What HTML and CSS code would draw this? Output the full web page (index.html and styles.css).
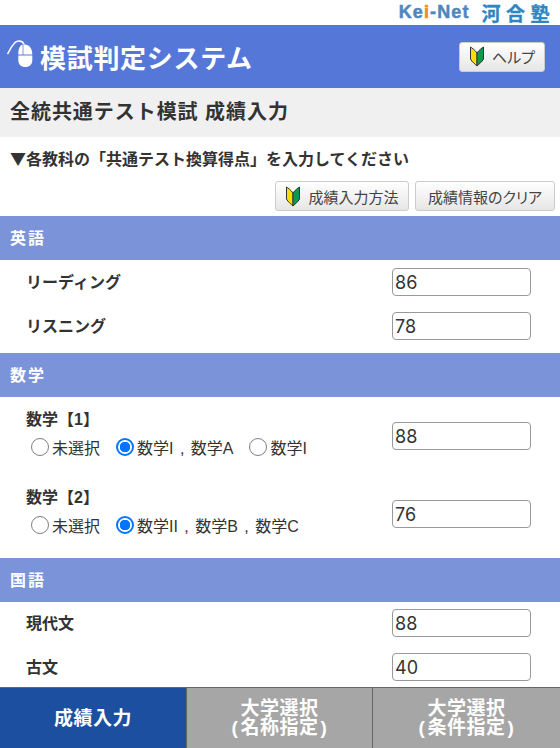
FILE: index.html
```html
<!DOCTYPE html>
<html lang="ja">
<head>
    <meta charset="UTF-8">
    <meta name="viewport" content="width=device-width, initial-scale=1.0">
    <title>模試判定システム</title>
    <link rel="stylesheet" href="styles.css">
</head>
<body>
    <div class="logos">
        <span class="kei">Ke<span class="kei-i">i</span>-Net</span>
        <span class="juku">河合塾</span>
    </div>
    <div class="header">
        <div class="brand">
            <svg class="mouse" width="28" height="30" viewBox="0 0 28 30">
                <path d="M0.500 14 C2.500 11 4 7 6 5 C8 2 10 1 12 1 C14.500 1 16 2 17 4" fill="none" stroke="#fff" stroke-width="1.500"/>
                <path d="M11.300 14.600 C11.300 9 12.500 5.500 15.600 4.500 L15.600 14.600 Z" fill="#fff"/>
                <path d="M16.400 4.200 C22 4.200 25.300 8 25.300 14.600 L16.400 14.600 Z" fill="#fff"/>
                <path d="M11.300 15.400 L25.300 15.400 L25.300 20 C25.300 24.500 22.500 27 18.300 27 C14 27 11.300 24.500 11.300 20 Z" fill="#fff"/>
            </svg>
            <h1>模試判定システム</h1>
        </div>
        <a class="button help">
            <svg class="leaf" width="16" height="21" viewBox="0 0 16 21"><use href="#leaf"/></svg>
            ヘルプ
        </a>
    </div>
    <h2 class="page-title">全統共通テスト模試 成績入力</h2>
    <p class="lead">▼各教科の「共通テスト換算得点」を入力してください</p>
    <div class="actions">
        <a class="button how">
            <svg class="leaf" width="16" height="21" viewBox="0 0 16 21"><use href="#leaf"/></svg>
            成績入力方法
        </a>
        <a class="button clear">成績情報のクリア</a>
    </div>

    <h3 class="section">英語</h3>
    <div class="group">
        <div class="row">
            <span class="label">リーディング</span>
            <input class="score" type="text" value="86">
        </div>
        <div class="row">
            <span class="label">リスニング</span>
            <input class="score" type="text" value="78">
        </div>
    </div>

    <h3 class="section">数学</h3>
    <div class="group">
        <div class="row tall">
            <div class="choice">
                <span class="label">数学【1】</span>
                <div class="radios">
                    <label><input type="radio" name="math1">未選択</label>
                    <label><input type="radio" name="math1" checked>数学I , 数学A</label>
                    <label><input type="radio" name="math1">数学I</label>
                </div>
            </div>
            <input class="score" type="text" value="88">
        </div>
        <div class="row tall">
            <div class="choice">
                <span class="label">数学【2】</span>
                <div class="radios">
                    <label><input type="radio" name="math2">未選択</label>
                    <label><input type="radio" name="math2" checked>数学II , 数学B , 数学C</label>
                </div>
            </div>
            <input class="score" type="text" value="76">
        </div>
    </div>

    <h3 class="section">国語</h3>
    <div class="group japanese">
        <div class="row">
            <span class="label">現代文</span>
            <input class="score" type="text" value="88">
        </div>
        <div class="row">
            <span class="label">古文</span>
            <input class="score" type="text" value="40">
        </div>
    </div>

    <div class="tabs">
        <a class="tab active">成績入力</a>
        <a class="tab">大学選択<br>(&#8202;名称指定&#8202;)</a>
        <a class="tab">大学選択<br>(&#8202;条件指定&#8202;)</a>
    </div>

    <svg width="0" height="0" class="defs">
        <symbol id="leaf" viewBox="0 0 16 21">
            <path d="M8 7 C6 4 3 2 1.500 1 L1.500 13 C3 16 6 18 8 20 Z" fill="#f5e000" stroke="#333" stroke-width="1"/>
            <path d="M8 7 C10 4 13 2 14.500 1 L14.500 13 C13 16 10 18 8 20 Z" fill="#0a9a50" stroke="#333" stroke-width="1"/>
        </symbol>
    </svg>
</body>
</html>
```

FILE: styles.css
```css
:root {
    --blue: #5577d8;
    --section: #7b93d9;
    --text: #333;
    --radio: #0075ff;
}

html, body {
    margin: 0;
    padding: 0;
}

body {
    height: 748px;
    overflow: hidden;
    background-color: #fff;
    color: var(--text);
    font-family: "Liberation Sans", "Noto Sans CJK JP", sans-serif;
    font-size: 16px;
}

.defs {
    display: block;
}

.logos {
    height: 25px;
    display: flex;
    justify-content: flex-end;
    align-items: center;
    gap: 12px;
    padding-right: 5px;
    font-weight: bold;
}

.kei {
    color: #4f86c0;
    font-size: 18px;
    letter-spacing: 1.100px;
    -webkit-text-stroke: 0.500px #4f86c0;
}

.kei-i {
    color: #f08a24;
    -webkit-text-stroke: 0.500px #f08a24;
}

.juku {
    color: #2d86c2;
    font-size: 19px;
    letter-spacing: 5.500px;
    -webkit-text-stroke: 0.300px #2d86c2;
}

.header {
    height: 63px;
    background-color: var(--blue);
    display: flex;
    justify-content: space-between;
    align-items: center;
    padding: 0 15px 0 7px;
}

.brand {
    display: flex;
    align-items: center;
    gap: 5px;
}

.mouse {
    margin-bottom: 3px;
}

h1 {
    margin: 0;
    color: #fff;
    font-size: 26px;
    font-weight: bold;
    letter-spacing: 0.700px;
}

.button {
    box-sizing: border-box;
    display: flex;
    align-items: center;
    justify-content: center;
    gap: 7px;
    height: 30px;
    border: 1px solid #ccc;
    border-radius: 3px;
    background: linear-gradient(#fff, #e6e6e6);
    color: #444;
    font-size: 15px;
}

.help {
    width: 86px;
    font-feature-settings: "palt";
}

.how {
    width: 134px;
}

.clear {
    width: 140px;
    font-feature-settings: "palt";
}

.page-title {
    margin: 0;
    height: 49px;
    line-height: 49px;
    padding-left: 10px;
    background-color: #f0f0f0;
    font-size: 20px;
    font-weight: bold;
    letter-spacing: 0.950px;
}

.lead {
    margin: 0;
    height: 44px;
    line-height: 43px;
    padding-left: 10px;
    font-family: "Noto Sans CJK JP", sans-serif;
    font-size: 16px;
    font-weight: bold;
}

.actions {
    display: flex;
    justify-content: flex-end;
    gap: 6px;
    height: 35px;
    padding-right: 5px;
}

.section {
    margin: 0;
    height: 44px;
    line-height: 45px;
    padding-left: 10px;
    background-color: var(--section);
    color: #fff;
    font-size: 16px;
    font-weight: bold;
    letter-spacing: 2px;
}

.group {
    padding-bottom: 5px;
}

.japanese {
    margin-top: -1px;
}

.row {
    display: flex;
    justify-content: space-between;
    align-items: center;
    height: 44px;
    padding: 0 29px 0 26px;
}

.tall {
    height: 78px;
}

.choice {
    margin-bottom: 7px;
}

.label {
    display: block;
    padding-top: 1px;
    line-height: 20px;
    font-size: 16px;
    font-weight: bold;
}

.score {
    box-sizing: border-box;
    width: 139px;
    height: 28px;
    margin: 0;
    padding: 0 2px;
    border: 1px solid #999;
    border-radius: 4px;
    color: var(--text);
    font-family: "Inter", sans-serif;
    font-size: 18px;
}

.radios {
    display: flex;
    gap: 16px;
    margin-top: 7px;
    padding-left: 5px;
}

.radios label {
    display: flex;
    align-items: center;
    height: 20px;
    font-size: 16px;
    word-spacing: 2px;
}

.radios input {
    appearance: none;
    box-sizing: border-box;
    width: 18px;
    height: 18px;
    margin: 0 3px 0 0;
    border: 1.500px solid #808080;
    border-radius: 50%;
    background-color: #fff;
}

.radios input:checked {
    border: 2px solid var(--radio);
    background: radial-gradient(circle, var(--radio) 0 5px, #fff 5.500px);
}

.tabs {
    position: fixed;
    left: 0;
    right: 0;
    bottom: 0;
    height: 60px;
    display: grid;
    grid-template-columns: 186px 186px 188px;
    border-top: 1px solid #666;
}

.tab {
    display: flex;
    align-items: center;
    justify-content: center;
    background-color: #a6a6a6;
    border-left: 1px solid #666;
    color: #fff;
    font-size: 19px;
    font-weight: bold;
    line-height: 19px;
    text-align: center;
    letter-spacing: 0.500px;
}

.tab.active {
    background-color: #1c4fa0;
    border-left: 0;
}
```
